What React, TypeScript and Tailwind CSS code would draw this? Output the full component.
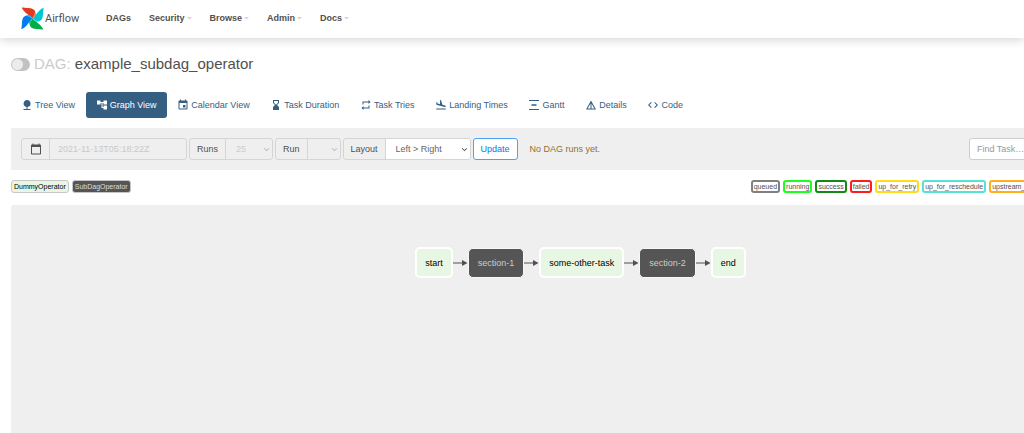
import React from 'react';
import {
  MdAccountTree,
  MdCalendarToday,
  MdCode,
  MdDetails,
  MdEvent,
  MdFlightLand,
  MdHourglassBottom,
  MdKeyboardArrowDown,
  MdNature,
  MdRepeat,
  MdVerticalDistribute,
} from 'react-icons/md';
import type { IconType } from 'react-icons';

const menus = ['Security', 'Browse', 'Admin', 'Docs'];

const tabs: { label: string; icon: IconType; active?: boolean }[] = [
  { label: 'Tree View', icon: MdNature },
  { label: 'Graph View', icon: MdAccountTree, active: true },
  { label: 'Calendar View', icon: MdEvent },
  { label: 'Task Duration', icon: MdHourglassBottom },
  { label: 'Task Tries', icon: MdRepeat },
  { label: 'Landing Times', icon: MdFlightLand },
  { label: 'Gantt', icon: MdVerticalDistribute },
  { label: 'Details', icon: MdDetails },
  { label: 'Code', icon: MdCode },
];

const states = [
  { label: 'queued', border: 'border-[#808080]' },
  { label: 'running', border: 'border-[#1cff1c]' },
  { label: 'success', border: 'border-[#138a13]' },
  { label: 'failed', border: 'border-[#ff1c1c]' },
  { label: 'up_for_retry', border: 'border-[#ffdb1c]' },
  { label: 'up_for_reschedule', border: 'border-[#55e3d5]' },
  { label: 'upstream_failed', border: 'border-[#ffae1c]' },
];

const nodes = [
  { label: 'start', subdag: false },
  { label: 'section-1', subdag: true },
  { label: 'some-other-task', subdag: false },
  { label: 'section-2', subdag: true },
  { label: 'end', subdag: false },
];

function Logo() {
  return (
    <svg viewBox="0 0 24 24" className="size-[23px]" aria-hidden="true">
      <path d="M12 12C9.500 8 5.500 8.500 1 1.200C.6.500 1.200.300 2 .500C7 1.500 13 .200 14.600 4.500C15.300 6.800 13.500 9.500 12 12Z" fill="#e43921" />
      <path d="M12 12C12.500 9.500 14.500 8.300 14.600 4.500L16 8.500L12 12Z" fill="#ff7557" />
      <path d="M12 12C16 9.500 15.500 5.500 22.800 1C23.500.600 23.700 1.200 23.500 2C22.500 7 23.800 13 19.500 14.600C17.200 15.300 14.500 13.500 12 12Z" fill="#00c7d4" />
      <path d="M12 12C14.500 12.500 15.700 14.500 19.500 14.600L15.500 16L12 12Z" fill="#11e1ee" />
      <path d="M12 12C14.500 16 18.500 15.500 23 22.800C23.400 23.500 22.800 23.700 22 23.500C17 22.500 11 23.800 9.400 19.500C8.700 17.200 10.500 14.500 12 12Z" fill="#00ad46" />
      <path d="M12 12C11.500 14.500 9.500 15.700 9.400 19.500L8 15.500L12 12Z" fill="#04d659" />
      <path d="M12 12C8 14.500 8.500 18.500 1.200 23C.500 23.400.300 22.800.500 22C1.500 17 .200 11 4.500 9.400C6.800 8.700 9.500 10.500 12 12Z" fill="#017cee" />
      <path d="M12 12C9.500 11.500 8.300 9.500 4.500 9.400L8.500 8L12 12Z" fill="#0cb6ff" />
    </svg>
  );
}

function Arrow() {
  return (
    <svg viewBox="0 0 15 8" className="h-2 w-[15px] shrink-0" aria-hidden="true">
      <path d="M0 4H10" stroke="#505050" strokeWidth="1" />
      <path d="M9 1L14.500 4L9 7Z" fill="#505050" />
    </svg>
  );
}

function SelectGroup({
  id,
  label,
  value,
  width,
  disabled = false,
}: {
  id: string;
  label: string;
  value: string;
  width: string;
  disabled?: boolean;
}) {
  return (
    <div className="flex h-[22px] rounded-[3px] border border-[#d5d5d5]">
      <label htmlFor={id} className="flex items-center border-r border-[#d5d5d5] px-[7px]">
        {label}
      </label>
      <div className={`relative flex ${width} ${disabled ? '' : 'rounded-r-[2px] bg-white'}`}>
        <select
          id={id}
          disabled={disabled}
          defaultValue={value}
          className="w-full appearance-none bg-transparent pl-[10px] pr-4 text-[#666] outline-none disabled:text-[#ccc] disabled:opacity-100"
        >
          <option value={value}>{value}</option>
        </select>
        <MdKeyboardArrowDown
          className={`pointer-events-none absolute right-0 top-[5px] size-[11px] ${disabled ? 'text-[#bbb]' : 'text-[#555]'}`}
        />
      </div>
    </div>
  );
}

export default function App() {
  return (
    <div className="min-h-screen overflow-x-hidden bg-white font-['Liberation_Sans',Arial,sans-serif] text-[9px] leading-3 text-[#51504f]">
      <header className="flex h-[38px] items-center pl-[21px] shadow-[0_1px_10px_rgba(0,0,0,0.2)]">
        <a href="#" className="flex w-[85px] items-center gap-px pb-0.5">
          <Logo />
          <span className="pt-px font-[family-name:Roboto,sans-serif] text-[11px]">Airflow</span>
        </a>
        <nav className="flex items-center gap-[18px] pb-0.5 font-bold">
          <a href="#">DAGs</a>
          {menus.map((menu) => (
            <button key={menu} type="button" className="flex items-center gap-0.5">
              {menu}
              <svg viewBox="0 0 5 3" className="h-[3px] w-[5px]" aria-hidden="true">
                <path d="M0 0H5L2.500 2.500Z" fill="#e0cbe2" />
              </svg>
            </button>
          ))}
        </nav>
      </header>

      <main className="flex min-h-[395px] flex-col pl-[11px] pt-4">
        <div className="flex items-center gap-1">
          <label className="relative mt-px flex" aria-label="Pause or unpause DAG">
            <input type="checkbox" className="peer sr-only" />
            <span className="flex h-[13px] w-[19px] items-center rounded-full bg-[#c4c2c1] p-px peer-checked:justify-end">
              <span className="size-[11px] rounded-full bg-[#edecec]" />
            </span>
          </label>
          <h1 className="text-[15px] leading-5">
            <span className="text-[#cbcbcb]">DAG:</span> example_subdag_operator
          </h1>
        </div>

        <nav className="mt-[18px] flex max-w-[682px] justify-between">
          {tabs.map(({ label, icon: Icon, active }) => (
            <a
              key={label}
              href="#"
              className={`flex h-[26px] items-center gap-0.5 whitespace-nowrap rounded-[3px] px-[10px] ${active ? 'bg-[#355e83] text-white' : 'text-[#355e83]'}`}
            >
              <Icon className="size-3" />
              {label}
            </a>
          ))}
        </nav>

        <form className="mt-[10px] flex h-[42px] items-center gap-0.5 bg-[#efefef] pl-[10px]" onSubmit={(e) => e.preventDefault()}>
          <div className="flex h-[22px] rounded-[3px] border border-[#d5d5d5]">
            <label htmlFor="base-date" className="flex w-7 items-center justify-center border-r border-[#d5d5d5]" aria-label="Base date">
              <MdCalendarToday className="size-3" />
            </label>
            <input
              id="base-date"
              type="text"
              disabled
              defaultValue="2021-11-13T05:18:22Z"
              className="w-[136px] px-2 text-[#c9c9c9]"
            />
          </div>
          <SelectGroup id="runs" label="Runs" value="25" width="w-[46px]" disabled />
          <SelectGroup id="run" label="Run" value="" width="w-8" disabled />
          <SelectGroup id="layout" label="Layout" value="Left > Right" width="w-[84px]" />
          <button type="submit" className="h-[22px] rounded-[3px] border border-[#4ba3f3] bg-white px-[7px] text-[#017cee]">
            Update
          </button>
          <span className="ml-[10px] text-[#8f6f35]">No DAG runs yet.</span>
          <input
            type="text"
            aria-label="Find Task"
            placeholder="Find Task…"
            className="-mr-20 ml-auto h-[22px] w-[135px] rounded-[3px] border border-[#ccc] bg-white px-[7px] placeholder:text-[#999]"
          />
        </form>

        <div className="mt-[10px] flex justify-between text-[7px] leading-[9px]">
          <div className="flex gap-[3px]">
            <span className="h-[13px] rounded-[3px] border border-[#c5c8c4] bg-[#e8f7e4] px-0.5 py-px text-black">DummyOperator</span>
            <span className="h-[13px] rounded-[3px] border border-[#c5c5c5] bg-[#555] px-0.5 py-px text-[#ddd]">SubDagOperator</span>
          </div>
          <div className="-mr-[21px] flex gap-[3px]">
            {states.map(({ label, border }) => (
              <span key={label} className={`h-[13px] rounded-[3px] border-2 bg-white px-px ${border}`}>
                {label}
              </span>
            ))}
          </div>
        </div>

        <section className="mt-3 flex flex-1 items-start justify-center rounded-tl-[3px] bg-[#efefef] pl-[126px] pt-[42px]" aria-label="DAG graph">
          <div className="flex items-center">
            {nodes.map(({ label, subdag }, i) => (
              <React.Fragment key={label}>
                {i > 0 && <Arrow />}
                <div
                  className={`flex items-center rounded-[5px] ${subdag ? 'h-[30px] border border-[#f8f8f8] bg-[#555] px-[9px] text-[#ccc]' : 'h-[31px] border-2 border-white bg-[#e8f7e4] px-2 text-black'}`}
                >
                  {label}
                </div>
              </React.Fragment>
            ))}
          </div>
        </section>
      </main>
    </div>
  );
}
